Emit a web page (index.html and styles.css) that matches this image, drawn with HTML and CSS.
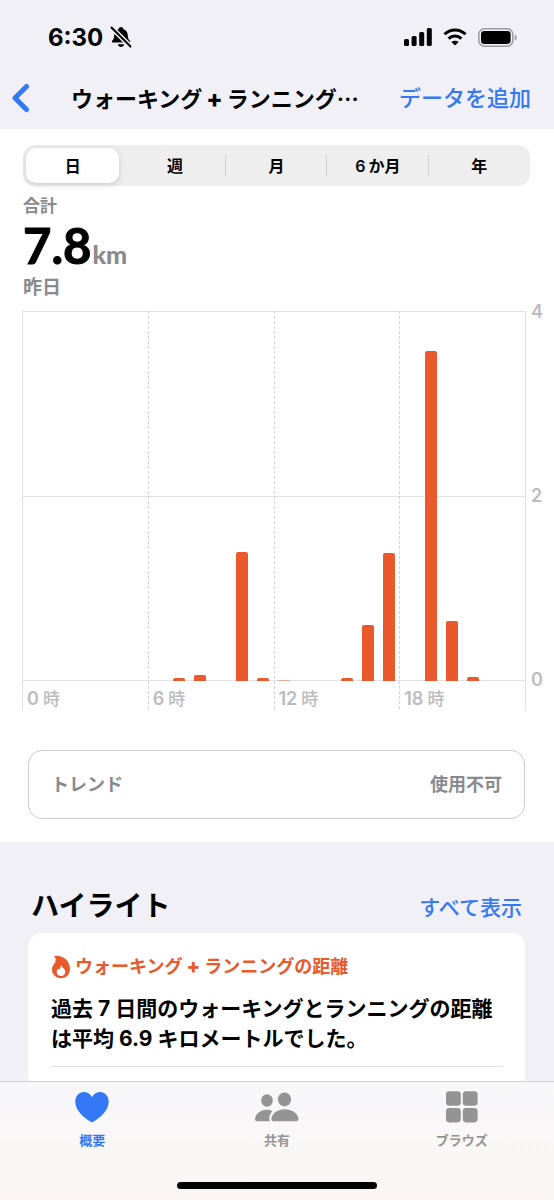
FILE: index.html
```html
<!DOCTYPE html>
<html lang="ja">
<head>
<meta charset="utf-8">
<meta name="viewport" content="width=device-width, initial-scale=1">
<title>ウォーキング+ランニングの距離</title>
<link rel="stylesheet" href="styles.css">
</head>
<body>
<div class="screen">
  <header class="top">
    <div class="status">
      <div class="status-left">
        <span class="time">6:30</span>
        <svg class="bell" viewBox="0 0 22 22" width="22" height="22" aria-hidden="true">
          <path d="M11 1c1.400 0 2.200.9 2.200 1.900C16.300 3.800 17.600 6.300 17.800 9.500c.2 3 1 4.200 2.200 5.500.5.600.2 1.500-.7 1.500H2.700c-.9 0-1.200-.9-.7-1.500C3.200 13.700 4 12.500 4.200 9.500 4.400 6.300 5.700 3.800 8.800 2.900 8.800 1.900 9.600 1 11 1z"/>
          <path d="M7.800 18.200h6.400c-.4 1.700-1.600 2.800-3.200 2.800s-2.800-1.100-3.200-2.800z"/>
          <path class="bell-gap" d="M1.500 1.500l19 19"/>
          <path class="bell-slash" d="M1.500 1.500l19 19"/>
        </svg>
      </div>
      <div class="status-right">
        <svg viewBox="0 0 28 18" width="28" height="18" aria-hidden="true"><rect x="0" y="11" width="5" height="7" rx="1.500"/><rect x="7.600" y="8" width="5" height="10" rx="1.500"/><rect x="15.200" y="4" width="5" height="14" rx="1.500"/><rect x="22.800" y="0" width="5" height="18" rx="1.500"/></svg>
        <svg viewBox="0 0 24 18" width="24" height="18" aria-hidden="true">
          <g class="wifi-arcs"><path d="M1.500 6.200a15 15 0 0 1 21 0"/><path d="M5.600 10.600a9.200 9.200 0 0 1 12.800 0"/></g>
          <path d="M12 17.600l-3.600-3.500a5.200 5.200 0 0 1 7.200 0z"/>
        </svg>
        <svg viewBox="0 0 40 19" width="40" height="19" aria-hidden="true"><rect class="battery-shell" x=".8" y=".8" width="34" height="17.400" rx="5.500"/><rect x="3" y="3" width="29.600" height="13" rx="3.400"/><path class="battery-tip" d="M36.800 6.400c1.300.5 1.900 1.600 1.900 3.100s-.6 2.600-1.900 3.100z"/></svg>
      </div>
    </div>
    <nav class="navbar">
      <button class="back" type="button" aria-label="戻る">
        <svg viewBox="0 0 20 30" width="20" height="30" aria-hidden="true"><path d="M15.500 3.500L4 15l11.500 11.500"/></svg>
      </button>
      <h1 class="title">ウォーキング<span class="plus">+</span>ランニング<span class="dots">…</span></h1>
      <button class="link add" type="button">データを追加</button>
    </nav>
  </header>

  <main class="content">
    <section class="summary">
      <div class="segments">
        <button class="segment selected" type="button" aria-pressed="true">日</button>
        <button class="segment" type="button">週</button>
        <button class="segment" type="button">月</button>
        <button class="segment" type="button"><span class="lead">6</span>か月</button>
        <button class="segment" type="button">年</button>
      </div>
      <p class="total-label">合計</p>
      <p class="total"><span class="value">7.8</span><span class="unit">km</span></p>
      <p class="day">昨日</p>

      <div class="chart">
        <div class="rules"><i></i><i></i></div>
        <div class="quarters">
          <div class="quarter"><span class="hour">0</span>時</div>
          <div class="quarter"><span class="hour">6</span>時</div>
          <div class="quarter"><span class="hour">12</span>時</div>
          <div class="quarter"><span class="hour">18</span>時</div>
        </div>
        <div class="bars">
          <i class="h7" style="height:0.8%"></i>
          <i class="h8" style="height:1.500%"></i>
          <i class="h10" style="height:35%"></i>
          <i class="h11" style="height:0.7%"></i>
          <i class="h12 faint" style="height:0.3%"></i>
          <i class="h15" style="height:0.8%"></i>
          <i class="h16" style="height:15.100%"></i>
          <i class="h17" style="height:34.500%"></i>
          <i class="h19" style="height:89.300%"></i>
          <i class="h20" style="height:16.100%"></i>
          <i class="h21" style="height:1%"></i>
        </div>
        <div class="scale"><span>4</span><span>2</span><span>0</span></div>
      </div>

      <button class="trend" type="button"><span>トレンド</span><span>使用不可</span></button>
    </section>

    <section class="highlights">
      <div class="section-head">
        <h2 class="section-title">ハイライト</h2>
        <a class="link" href="#all">すべて表示</a>
      </div>
      <article class="card">
        <h3 class="card-title">
          <svg viewBox="0 0 20 24" width="20" height="24" aria-hidden="true"><path d="M3 1C10.500-.6 19 4.800 19 14c0 5.500-3.800 9.200-9 9.200S1 19.600 1 14.800c0-3.400 1.600-5.800 4.200-8.200l-1.200-.2C5.200 4.600 4.800 2.800 3 1z"/><path class="flame-core" d="M10 9.800c.6 2.300 4.300 4 4.300 7.200 0 2.300-1.900 4-4.300 4s-4.300-1.700-4.300-4c0-1.400.6-2.500 1.300-3.300.3.600.7 1 1.200 1.100 1-1.400 1.700-3 1.800-5z"/></svg>
          <span>ウォーキング<span class="plus">+</span>ランニングの距離</span>
        </h3>
        <p class="card-text">過去<span class="figure">7</span>日間のウォーキングとランニングの距離は平均<span class="figure">6.9</span>キロメートルでした。</p>
      </article>
    </section>
  </main>

  <footer class="tabbar">
    <nav class="tabs">
      <button class="tab active" type="button">
        <svg viewBox="0 0 48 36" width="48" height="36" aria-hidden="true"><path d="M24 34.500C21 32.700 7.300 25 7.300 13.500 7.300 8 11.200 4 16 4c3.500 0 6.500 2 8 5.300C25.500 6 28.500 4 32 4c4.800 0 8.700 4 8.700 9.500C40.700 25 27 32.700 24 34.500z"/></svg>
        <span>概要</span>
      </button>
      <button class="tab" type="button">
        <svg viewBox="0 0 48 36" width="48" height="36" aria-hidden="true"><ellipse cx="14" cy="12.500" rx="5.800" ry="6.200"/><path d="M19.400 23C15 20.700 8 21.300 4.500 25.500 2.800 27.500 2 29.700 2 31c0 1.400.8 2.300 2.200 2.300h12.600c-1.400-3.500-.1-7.200 2.600-10.300z"/><ellipse cx="31.500" cy="11.400" rx="6.600" ry="7"/><path d="M20.600 33.300c-1.500 0-2.200-.9-2.200-2.200 0-4.200 5-9.800 13.300-9.800S45.500 26.900 45.500 31.100c0 1.300-.8 2.200-2.200 2.200z"/></svg>
        <span>共有</span>
      </button>
      <button class="tab" type="button">
        <svg viewBox="0 0 48 36" width="48" height="36" aria-hidden="true"><rect x="8" y="3.300" width="14.800" height="14.400" rx="3.300"/><rect x="24.800" y="3.300" width="14.800" height="14.400" rx="3.300"/><rect x="8" y="20" width="14.800" height="14.400" rx="3.300"/><rect x="24.800" y="20" width="14.800" height="14.400" rx="3.300"/></svg>
        <span>ブラウズ</span>
      </button>
    </nav>
    <div class="home-indicator"></div>
  </footer>
</div>
</body>
</html>
```

FILE: styles.css
```css
:root {
  --blue: #3478f6;
  --orange: #e9592b;
  --gray: #8a8a8e;
  --faint: #bcbcc0;
  --line: #e2e2e5;
  --backdrop: #f0f0f6;
  --jp: "Noto Sans CJK JP", sans-serif;
}

* {
  box-sizing: border-box;
  margin: 0;
}

body {
  font-family: Inter, var(--jp);
  color: #000;
  background: var(--backdrop);
}

button {
  font: inherit;
  color: inherit;
  background: none;
  border: 0;
  padding: 0;
}

svg {
  display: block;
  flex: none;
  fill: currentColor;
}

.plus {
  margin: 0 4px;
  font-size: 24px;
  font-weight: 800;
  line-height: 1;
}

.figure { margin: 0 5px; }
.lead { margin-right: 3px; }

.screen {
  display: flex;
  flex-direction: column;
  height: 100vh;
}

/* Status bar and navigation */
.status {
  display: flex;
  justify-content: space-between;
  align-items: center;
  height: 74px;
  padding: 0 36px 0 48px;
}

.status-left,
.status-right {
  display: flex;
  align-items: center;
}

.status-left { gap: 7px; }
.status-right { gap: 11px; }

.time {
  font-size: 24px;
  font-weight: 700;
}

.bell-gap,
.bell-slash {
  fill: none;
  stroke: var(--backdrop);
  stroke-width: 5;
}

.bell-slash {
  stroke: #000;
  stroke-width: 2;
  stroke-linecap: round;
}

.wifi-arcs {
  fill: none;
  stroke: #000;
  stroke-width: 3;
}

.battery-shell {
  fill: none;
  stroke: #9a9a9e;
  stroke-width: 1.5;
}

.battery-tip { fill: #9a9a9e; }

.navbar {
  display: flex;
  align-items: center;
  height: 55px;
  padding: 0 23px 7px 11px;
}

.back svg {
  fill: none;
  stroke: var(--blue);
  stroke-width: 5;
  stroke-linecap: round;
  stroke-linejoin: round;
}

.title {
  flex: 1;
  padding-left: 40px;
  font-size: 22px;
  font-weight: 700;
  line-height: 32px;
  white-space: nowrap;
}

.dots { font-family: var(--jp); }

.link {
  color: var(--blue);
  font-size: 21px;
  font-weight: 500;
  line-height: 32px;
  text-decoration: none;
  white-space: nowrap;
}

.add { font-size: 22px; }

/* Distance summary */
.content {
  flex: 1;
  min-height: 0;
  overflow: hidden;
}

.summary {
  padding: 16px 0 23px 23px;
  background: #fff;
}

.segments {
  display: grid;
  grid-template-columns: repeat(5, 1fr);
  height: 41px;
  margin-right: 24px;
  padding: 3px 0;
  border-radius: 12px;
  background: #eeeeef;
}

.segment {
  padding-bottom: 2px;
  font-size: 16px;
  font-weight: 600;
  background: linear-gradient(#d2d2d6, #d2d2d6) right center / 1px 21px no-repeat;
}

.segment:last-child { background: none; }

.segment.selected {
  margin: 0 5px 0 3px;
  border-radius: 10px;
  background: #fff;
  box-shadow: 0 2px 6px rgba(0, 0, 0, 0.14);
}

.total-label {
  margin-top: 10px;
  color: var(--gray);
  font-size: 17px;
  font-weight: 600;
  line-height: 20px;
}

.total {
  display: flex;
  align-items: baseline;
  gap: 1px;
  height: 60px;
  font-family: Lato, sans-serif;
  font-weight: 700;
  line-height: 58px;
}

.value {
  font-size: 49px;
  -webkit-text-stroke: 1px #000;
}

.unit {
  color: var(--gray);
  font-size: 25px;
  font-weight: 900;
}

.day {
  color: var(--gray);
  font-size: 19px;
  font-weight: 600;
  line-height: 24px;
}

/* Hourly chart: rules, hour columns and bars share one grid cell */
.chart {
  display: grid;
  grid-template-columns: 1fr 28px;
  grid-template-rows: 370px 30px;
  margin: 11px 0 0 -1px;
  color: var(--faint);
  font-size: 18px;
  font-weight: 600;
}

.rules {
  grid-area: 1 / 1;
  display: grid;
  border: solid var(--line);
  border-width: 1px 0;
}

.rules i + i { border-top: 1px solid var(--line); }

.quarters {
  grid-area: 1 / 1 / 3 / 2;
  display: grid;
  grid-template-columns: repeat(4, 1fr);
  border-right: 1px solid var(--line);
}

.quarter {
  display: flex;
  align-items: flex-end;
  gap: 4px;
  padding-left: 5px;
  font-size: 17px;
  font-weight: 500;
  line-height: 24px;
  background: repeating-linear-gradient(#d4d4d8 0 3px, transparent 3px 5px) left / 1px 100% no-repeat;
}

.hour {
  font-size: 18px;
  font-weight: 600;
}

.quarter:first-child { background-image: linear-gradient(var(--line), var(--line)); }

.bars {
  grid-area: 1 / 1;
  display: grid;
  grid-template-columns: repeat(24, 1fr);
  align-items: end;
  justify-items: center;
  padding-right: 1px;
}

.bars i {
  grid-row: 1;
  width: 12px;
  border-radius: 2px 2px 0 0;
  background: var(--orange);
}

.bars .faint { opacity: 0.4; }

.h7 { grid-column: 8; }
.h8 { grid-column: 9; }
.h10 { grid-column: 11; }
.h11 { grid-column: 12; }
.h12 { grid-column: 13; }
.h15 { grid-column: 16; }
.h16 { grid-column: 17; }
.h17 { grid-column: 18; }
.h19 { grid-column: 20; }
.h20 { grid-column: 21; }
.h21 { grid-column: 22; }

.scale {
  grid-area: 1 / 2;
  display: flex;
  flex-direction: column;
  justify-content: space-between;
  margin: -9px 0;
  padding-left: 5px;
  line-height: 20px;
}

.trend {
  display: flex;
  justify-content: space-between;
  align-items: center;
  width: calc(100% - 34px);
  height: 69px;
  margin: 39px 0 0 5px;
  padding: 0 22px 3px;
  border: 1px solid #cbcbd0;
  border-radius: 14px;
  color: var(--gray);
  font-size: 18px;
  font-weight: 600;
}

/* Highlights */
.highlights { padding: 46px 29px 0 28px; }

.section-head {
  display: flex;
  justify-content: space-between;
  align-items: flex-end;
  padding: 0 3px;
}

.section-title {
  font-size: 28px;
  font-weight: 700;
  line-height: 36px;
}

.card {
  margin-top: 9px;
  padding: 22px 22px 40px 23px;
  border-radius: 14px;
  background: #fff;
}

.card-title {
  display: flex;
  align-items: center;
  gap: 4px;
  color: var(--orange);
  font-size: 18px;
  font-weight: 700;
  line-height: 24px;
}

.card-title .plus { font-size: 20px; }

.flame-core { fill: #fff; }

.card-text {
  margin-top: 15px;
  padding-bottom: 12px;
  border-bottom: 1px solid var(--line);
  font-size: 21px;
  font-weight: 700;
  line-height: 30px;
}

/* Tab bar */
.tabbar {
  display: flex;
  flex-direction: column;
  justify-content: space-between;
  align-items: center;
  height: 119px;
  padding-bottom: 11px;
  border-top: 1px solid #cfcfd2;
  background: linear-gradient(#f7f7f9, #fbf6f4);
}

.tabs {
  display: grid;
  grid-template-columns: repeat(3, 1fr);
  width: 100%;
}

.tab {
  display: flex;
  flex-direction: column;
  align-items: center;
  gap: 7px;
  padding-top: 6px;
  color: #949494;
  font-size: 13px;
  font-weight: 600;
  line-height: 18px;
}

.active { color: var(--blue); }

.home-indicator {
  width: 36%;
  height: 7px;
  border-radius: 4px;
  background: #000;
}
```
